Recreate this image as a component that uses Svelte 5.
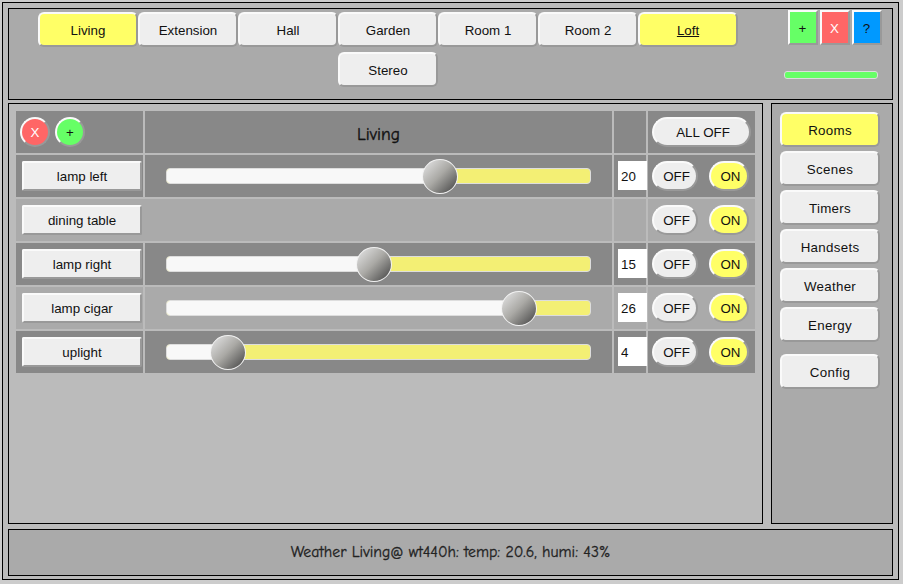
<script>
  const rooms = ['Living', 'Extension', 'Hall', 'Garden', 'Room 1', 'Room 2', 'Loft', 'Stereo'];
  const menu = ['Rooms', 'Scenes', 'Timers', 'Handsets', 'Weather', 'Energy', 'Config'];
  const devices = [
    { name: 'lamp left', level: 20, pos: 273.5 },
    { name: 'dining table' },
    { name: 'lamp right', level: 15, pos: 207.5 },
    { name: 'lamp cigar', level: 26, pos: 352.5 },
    { name: 'uplight', level: 4, pos: 61.5 }
  ];
</script>

<div class="frame">
  <header class="panel">
    <nav class="rooms">
      {#each rooms as room}
        <button class="tab" class:active={room === 'Living' || room === 'Loft'} class:linked={room === 'Loft'}>{room}</button>
      {/each}
    </nav>
    <div class="tools">
      <div class="squares">
        <button class="square green">+</button>
        <button class="square red">X</button>
        <button class="square blue">?</button>
      </div>
      <div class="status"></div>
    </div>
  </header>

  <div class="middle">
    <main class="panel">
      <div class="grid">
        <div class="row dark">
          <div class="cell first top">
            <button class="round red">X</button>
            <button class="round green">+</button>
          </div>
          <div class="cell title">Living</div>
          <div class="cell"></div>
          <div class="cell actions"><button class="pill all">ALL OFF</button></div>
        </div>
        {#each devices as d, i}
          <div class="row" class:dark={i % 2 === 0}>
            <div class="cell first" class:wide={d.level === undefined}><button class="device">{d.name}</button></div>
            {#if d.level !== undefined}
              <div class="cell slide">
                <div class="track">
                  <div class="fill" style="width: {d.pos}px"></div>
                  <div class="thumb" style="left: {d.pos}px"></div>
                </div>
              </div>
            {/if}
            <div class="cell value">
              {#if d.level !== undefined}<input value={d.level} />{/if}
            </div>
            <div class="cell actions">
              <button class="pill off">OFF</button>
              <button class="pill on">ON</button>
            </div>
          </div>
        {/each}
      </div>
    </main>
    <aside class="panel">
      {#each menu as item}
        <button class="tab" class:active={item === 'Rooms'} class:config={item === 'Config'}>{item}</button>
      {/each}
    </aside>
  </div>

  <footer class="panel"><span>Weather Living@ wt440h: temp: 20.6, humi: 43%</span></footer>
</div>

<style>
  :global(body) {
    background: #ccc;
    overflow: hidden;
  }
  :global(#app) {
    display: flow-root;
  }
  .frame, .frame * {
    box-sizing: border-box;
  }
  .frame {
    display: flex;
    flex-direction: column;
    width: 897px;
    height: 578px;
    margin: 2px;
    padding: 5px 5px 3px;
    border: 1px solid #000;
    background: #bbb;
    font-family: "Liberation Sans", Arial, sans-serif;
    font-size: 13.33px;
    color: #111;
  }
  .panel {
    flex: none;
    border: 1px solid #000;
    background: #aaa;
  }
  button {
    display: flex;
    align-items: center;
    justify-content: center;
    flex: none;
    margin: 0;
    padding: 0;
    border: 2px solid;
    border-color: #fafafa #999 #999 #fafafa;
    background: #eee;
    font: inherit;
    letter-spacing: inherit;
    color: #111;
  }
  header {
    display: flex;
    height: 92px;
  }
  .rooms {
    display: flex;
    flex-wrap: wrap;
    justify-content: center;
    align-content: flex-start;
    row-gap: 5px;
    width: 700px;
    margin: 3px 0 0 29px;
  }
  .tab {
    width: 100px;
    height: 35px;
    padding: 2px 0 0;
    border-radius: 6px;
  }
  .active {
    background: #ff6;
  }
  .linked {
    text-decoration: underline;
  }
  .tools {
    display: flex;
    flex-direction: column;
    margin: 1px 0 0 46px;
  }
  .squares {
    display: flex;
    gap: 2px;
    margin-left: 4px;
  }
  .square {
    width: 30px;
    height: 35px;
    padding: 1px 1px 0 0;
  }
  .green {
    background: #6f6;
  }
  .red {
    background: #f66;
    color: #fff;
  }
  .blue {
    background: #09f;
  }
  .status {
    width: 94px;
    height: 8px;
    margin-top: 26px;
    border: 1px solid #ddd;
    border-radius: 3px;
    background: #6f6;
  }
  .middle {
    display: flex;
    flex: none;
    justify-content: space-between;
    height: 421px;
    margin-top: 3px;
  }
  main.panel {
    width: 755px;
    padding: 7px;
    background: #bbb;
  }
  .grid {
    display: flex;
    flex-direction: column;
    gap: 2px;
  }
  .row {
    display: grid;
    grid-template-columns: 127px 467px 32px 107px;
    column-gap: 2px;
    height: 42px;
  }
  .cell {
    display: flex;
    background: #aaa;
  }
  .dark .cell {
    background: #888;
  }
  .first {
    padding: 6px 0 0 6px;
  }
  .wide {
    grid-column: span 2;
  }
  .top {
    gap: 5px;
    padding-left: 4px;
  }
  .round {
    width: 30px;
    height: 30px;
    border-radius: 50%;
  }
  .title {
    align-items: center;
    justify-content: center;
    padding-top: 3px;
    font-family: "Comic Sans MS", "Comic Neue", Lato, sans-serif;
    font-size: 17.5px;
    -webkit-text-stroke: 0.35px #111;
  }
  .device {
    width: 120px;
    height: 30px;
    padding-top: 1px;
    border-radius: 2px;
  }
  .slide {
    padding: 13px 0 0 21px;
  }
  .track {
    position: relative;
    width: 425px;
    height: 16px;
    border: 1px solid #ddd;
    border-radius: 4px;
    background: #f3ef74;
  }
  .fill {
    height: 14px;
    border-radius: 3px 0 0 3px;
    background: #f8f8f8;
  }
  .thumb {
    position: absolute;
    top: -10px;
    width: 36px;
    height: 35px;
    margin-left: -18.5px;
    border: 1px solid #f2f2f2;
    border-radius: 50%;
    background: linear-gradient(135deg, #ddd 8%, #aaa9a5 48%, #444 98%);
  }
  .value {
    padding: 6px 0 0 4px;
  }
  input {
    position: relative;
    flex: none;
    width: 29px;
    height: 29px;
    margin: 0;
    padding: 2px 0 0 3px;
    border: 0;
    background: #fff;
    font: inherit;
    color: #111;
  }
  .actions {
    gap: 11px;
    padding: 6px 0 0 4px;
  }
  .pill {
    height: 30px;
    padding: 1px 0 0 3px;
    border-radius: 15px;
  }
  .all {
    width: 99px;
  }
  .off {
    width: 46px;
  }
  .on {
    width: 40px;
    background: #ff6;
  }
  aside {
    display: flex;
    flex-direction: column;
    gap: 4px;
    width: 122px;
    padding: 8px;
    letter-spacing: 0.3px;
  }
  .config {
    margin-top: 8px;
  }
  footer {
    display: flex;
    align-items: center;
    justify-content: center;
    height: 47px;
    margin-top: 5px;
    padding-bottom: 2px;
    font-family: "Comic Sans MS", "Comic Neue", Lato, sans-serif;
    font-size: 15.75px;
    color: #222;
    -webkit-text-stroke: 0.3px #222;
  }
</style>
